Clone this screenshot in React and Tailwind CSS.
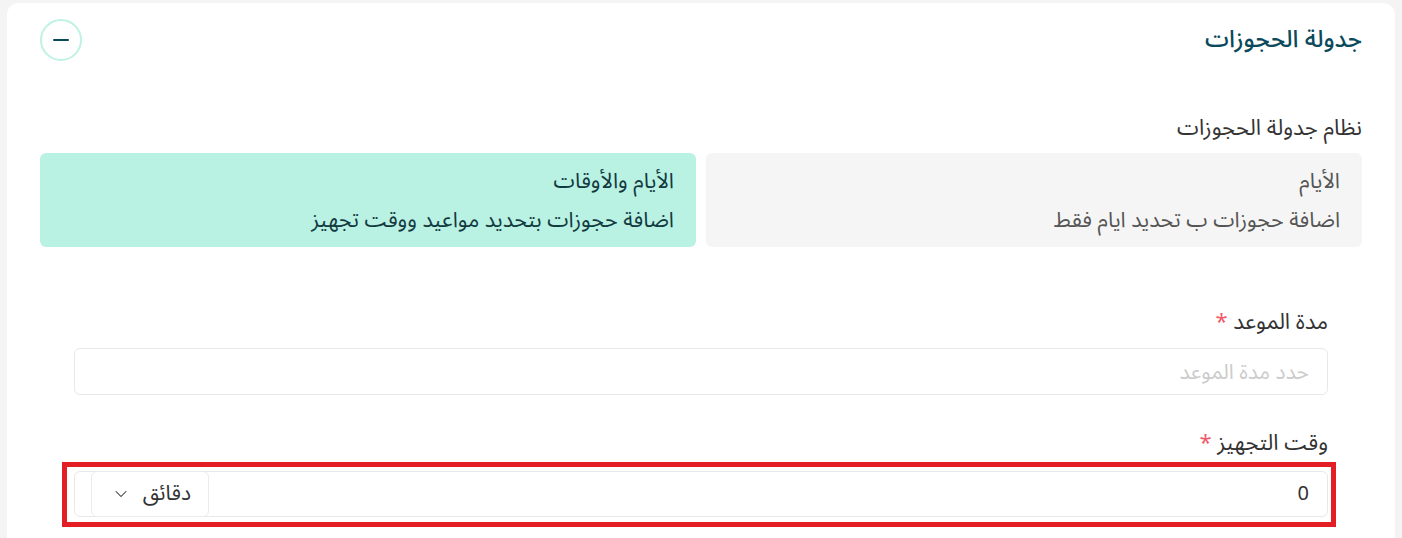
import { ChevronDown } from 'lucide-react';

const font = { fontFamily: '"Noto Sans Arabic", "Noto Sans", "DejaVu Sans", sans-serif' };

const BookingSchedule = () => {
  const modes = [
    {
      title: 'الأيام',
      description: 'اضافة حجوزات ب تحديد ايام فقط',
      active: false,
    },
    {
      title: 'الأيام والأوقات',
      description: 'اضافة حجوزات بتحديد مواعيد ووقت تجهيز',
      active: true,
    },
  ];

  return (
    <div dir="rtl" className="min-h-screen bg-[#f4f4f4] pt-[3px] px-[7px] overflow-hidden" style={font}>
      <div className="bg-white rounded-xl px-[33px] pt-4 pb-10 min-h-[560px]">
        {/* Header */}
        <div className="flex items-center justify-between">
          <h2 className="text-[24px] leading-8 font-medium text-[#0b4a5c]">جدولة الحجوزات</h2>
          <button className="w-[42px] h-[42px] rounded-full border-2 border-[#bff2e4] flex items-center justify-center">
            <span className="block w-4 h-[1.5px] bg-[#0b4a5c] rounded"></span>
          </button>
        </div>

        {/* Mode selection */}
        <p className="mt-[52px] text-[22px] leading-[30px] text-[#333]">نظام جدولة الحجوزات</p>
        <div className="mt-[10px] grid grid-cols-2 gap-[10px]">
          {modes.map((mode, index) => (
            <div
              key={index}
              className={`h-[94px] rounded-md pr-[22px] pt-[13px] ${mode.active ? 'bg-[#b9f1e3] text-[#123a40]' : 'bg-[#f5f5f5] text-[#555]'}`}
            >
              <p className="text-[21.5px] leading-[30px]">{mode.title}</p>
              <p className="mt-[9px] text-[21.5px] leading-[30px]">{mode.description}</p>
            </div>
          ))}
        </div>

        {/* Fields */}
        <div className="px-[34px]">
          <label className="block mt-[60px] text-[22px] leading-[30px] text-[#333]">
            مدة الموعد <span className="text-[#f05a6a]">*</span>
          </label>
          <input
            dir="rtl"
            placeholder="حدد مدة الموعد"
            className="mt-[11px] w-full h-[47px] rounded-md border border-[#e8e8e8] px-[18px] text-[21px] text-[#333] placeholder:text-[#cccccc] outline-none"
            style={font}
          />

          <label className="block mt-[33px] text-[22px] leading-[30px] text-[#333]">
            وقت التجهيز <span className="text-[#f05a6a]">*</span>
          </label>
          <div className="relative mt-[13px]">
            <div className="flex items-stretch h-[46px] rounded-md border border-[#e8e8e8]">
              <input
                dir="rtl"
                defaultValue="0"
                className="flex-1 px-[18px] text-[20px] text-[#333] outline-none bg-transparent"
                style={font}
              />
              <div className="ml-4 w-[118px] flex items-center justify-between pr-[17px] pl-[19px] border border-[#ececec] rounded-md -my-px">
                <span className="text-[21px] text-[#333]">دقائق</span>
                <ChevronDown className="w-5 h-5 text-[#333]" strokeWidth={1.25} />
              </div>
            </div>
            <span className="pointer-events-none absolute -left-[12px] -right-[8px] -top-[9px] -bottom-[10px] border-[5px] border-[#e31e24]"></span>
          </div>
        </div>
      </div>
    </div>
  );
};

export default BookingSchedule;
